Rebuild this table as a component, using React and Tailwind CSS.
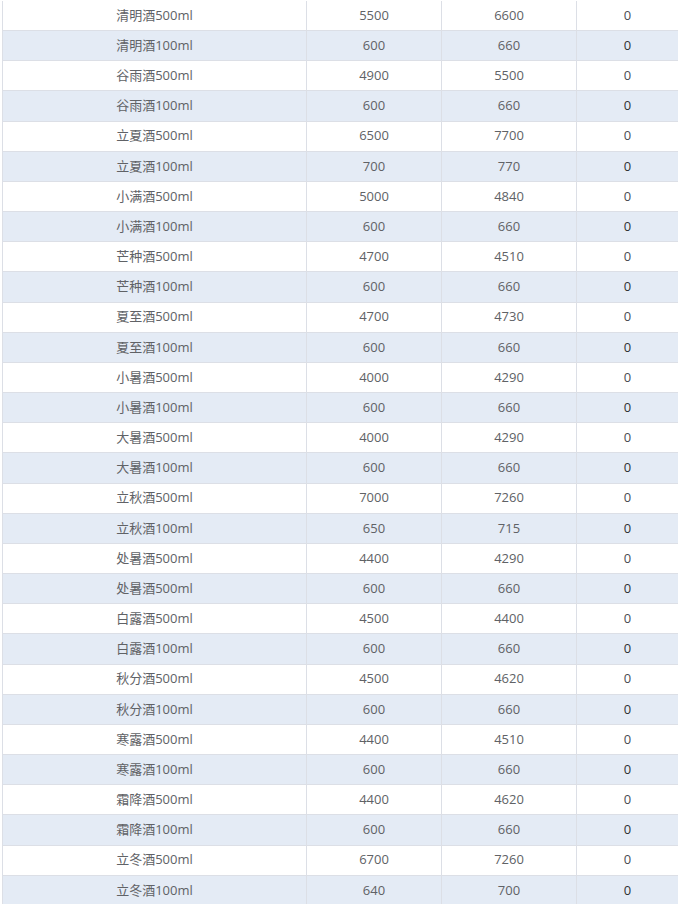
const rows = [
  ['清明酒500ml', '5500', '6600', '0'],
  ['清明酒100ml', '600', '660', '0'],
  ['谷雨酒500ml', '4900', '5500', '0'],
  ['谷雨酒100ml', '600', '660', '0'],
  ['立夏酒500ml', '6500', '7700', '0'],
  ['立夏酒100ml', '700', '770', '0'],
  ['小满酒500ml', '5000', '4840', '0'],
  ['小满酒100ml', '600', '660', '0'],
  ['芒种酒500ml', '4700', '4510', '0'],
  ['芒种酒100ml', '600', '660', '0'],
  ['夏至酒500ml', '4700', '4730', '0'],
  ['夏至酒100ml', '600', '660', '0'],
  ['小暑酒500ml', '4000', '4290', '0'],
  ['小暑酒100ml', '600', '660', '0'],
  ['大暑酒500ml', '4000', '4290', '0'],
  ['大暑酒100ml', '600', '660', '0'],
  ['立秋酒500ml', '7000', '7260', '0'],
  ['立秋酒100ml', '650', '715', '0'],
  ['处暑酒500ml', '4400', '4290', '0'],
  ['处暑酒500ml', '600', '660', '0'],
  ['白露酒500ml', '4500', '4400', '0'],
  ['白露酒100ml', '600', '660', '0'],
  ['秋分酒500ml', '4500', '4620', '0'],
  ['秋分酒100ml', '600', '660', '0'],
  ['寒露酒500ml', '4400', '4510', '0'],
  ['寒露酒100ml', '600', '660', '0'],
  ['霜降酒500ml', '4400', '4620', '0'],
  ['霜降酒100ml', '600', '660', '0'],
  ['立冬酒500ml', '6700', '7260', '0'],
  ['立冬酒100ml', '640', '700', '0'],
]

export default function App() {
  return (
    <div className="w-[678px] h-[904px] overflow-hidden bg-white pl-[2px] pt-[0.82px] font-['Open_Sans','Noto_Sans_CJK_SC',sans-serif] text-[13px] text-[#606266]">
      <div className="border-l border-[#dcdfe6]">
        {rows.map((r, i) => (
          <div
            key={i}
            className={`grid grid-cols-[304px_135px_135px_1fr] h-[30.18px] border-b border-[#dcdfe6] ${i % 2 ? 'bg-[#e4ebf5]' : 'bg-white'}`}
          >
            <div className="flex items-center justify-center border-r border-[#dcdfe6]">{r[0]}</div>
            <div className="flex items-center justify-center border-r border-[#dcdfe6]">{r[1]}</div>
            <div className="flex items-center justify-center border-r border-[#dcdfe6]">{r[2]}</div>
            <div className={`flex items-center justify-center ${i % 2 ? 'text-[#303133]' : 'text-[#4a4c52]'}`}>{r[3]}</div>
          </div>
        ))}
      </div>
    </div>
  )
}
